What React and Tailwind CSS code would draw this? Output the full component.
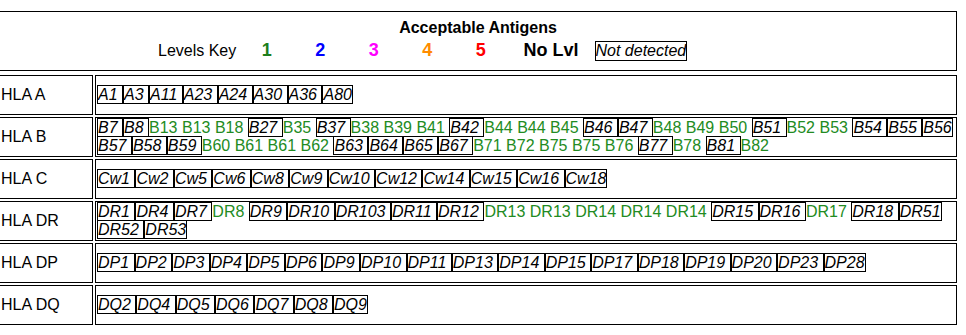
const rows = [
  {
    label: 'HLA A',
    items: 'A1* A3* A11* A23* A24* A30* A36* A80*',
  },
  {
    label: 'HLA B',
    items:
      'B7* B8* B13 B13 B18 B27* B35 B37* B38 B39 B41 B42* B44 B44 B45 B46* B47* B48 B49 B50 B51* B52 B53 B54* B55* B56* B57* B58* B59* B60 B61 B61 B62 B63* B64* B65* B67* B71 B72 B75 B75 B76 B77* B78 B81* B82',
  },
  {
    label: 'HLA C',
    items: 'Cw1* Cw2* Cw5* Cw6* Cw8* Cw9* Cw10* Cw12* Cw14* Cw15* Cw16* Cw18*',
  },
  {
    label: 'HLA DR',
    items:
      'DR1* DR4* DR7* DR8 DR9* DR10* DR103* DR11* DR12* DR13 DR13 DR14 DR14 DR14 DR15* DR16* DR17 DR18* DR51* DR52* DR53*',
  },
  {
    label: 'HLA DP',
    items:
      'DP1* DP2* DP3* DP4* DP5* DP6* DP9* DP10* DP11* DP13* DP14* DP15* DP17* DP18* DP19* DP20* DP23* DP28*',
  },
  {
    label: 'HLA DQ',
    items: 'DQ2* DQ4* DQ5* DQ6* DQ7* DQ8* DQ9*',
  },
];

// "*" marks an antigen that was not detected (boxed, italic)
const parse = (str) =>
  str.split(' ').map((tok) => ({
    name: tok.replace('*', ''),
    notDetected: tok.endsWith('*'),
  }));

const levels = [
  { n: '1', color: 'text-[#1c7f1c]' },
  { n: '2', color: 'text-[#0000ff]' },
  { n: '3', color: 'text-[#ff00ff]' },
  { n: '4', color: 'text-[#ff8c00]' },
  { n: '5', color: 'text-[#ff0000]' },
];

const Antigen = ({ name, notDetected }) =>
  notDetected ? (
    <span className="border border-black italic text-black">{name + ' '}</span>
  ) : (
    <span className="text-[#228b22]">{name + ' '}</span>
  );

export default function App() {
  return (
    <div className="min-h-screen bg-white pt-[11px] text-[16px] leading-[normal] text-black font-['Liberation_Sans',Arial,sans-serif]">
      <div className="ml-[-1px] w-[958px]">
        {/* Header / key */}
        <div className="h-[60px] border border-black pt-[7px] flex flex-col items-center">
          <div className="font-bold">Acceptable Antigens</div>
          <div className="mt-[3px] ml-[158px] self-start flex items-center">
            <div className="w-[82px]">Levels Key</div>
            {levels.map((l) => (
              <div key={l.n} className={`w-[53.5px] text-center text-[18px] font-bold ${l.color}`}>
                {l.n}
              </div>
            ))}
            <div className="w-[87px] text-center text-[18px] font-bold">No Lvl</div>
            <span className="border border-black italic">Not detected</span>
          </div>
        </div>

        {/* Antigen rows */}
        <div className="mt-[4px] flex flex-col gap-[2px]">
          {rows.map((row) => (
            <div key={row.label} className="flex gap-[2px]">
              <div className="w-[94px] h-[40px] border border-black p-px flex items-center">
                {row.label}
              </div>
              <div className="w-[862px] h-[40px] border border-black p-px flex items-center">
                <div className="w-full">
                  {parse(row.items).map((a, i) => (
                    <Antigen key={i} {...a} />
                  ))}
                </div>
              </div>
            </div>
          ))}
        </div>
      </div>
    </div>
  );
}
